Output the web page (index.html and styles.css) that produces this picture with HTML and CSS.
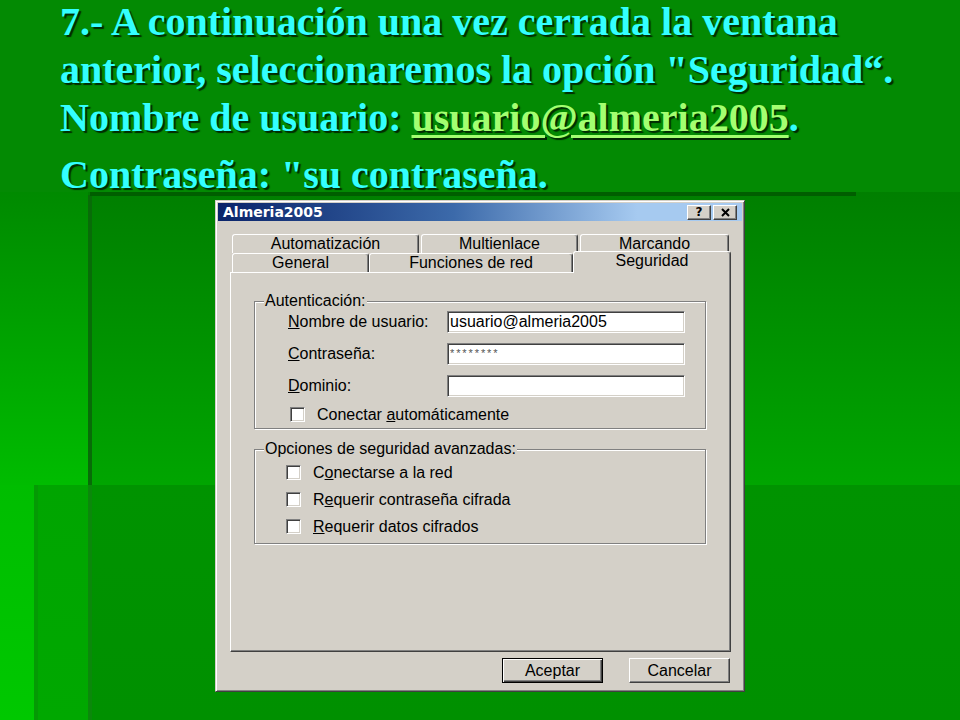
FILE: index.html
```html
<!DOCTYPE html>
<html lang="es">
<head>
<meta charset="utf-8">
<title>Almeria2005 - Seguridad</title>
<link rel="stylesheet" href="styles.css">
</head>
<body>
<div class="slide">
  <div class="text">
    <p class="p1">7.- A continuación una vez cerrada la ventana<br>anterior, seleccionaremos la opción "Seguridad“.<br>Nombre de usuario: <span class="link">usuario@almeria2005</span>.</p>
    <p class="p2">Contraseña: "su contraseña.</p>
  </div>

  <div class="dialog">
    <div class="titlebar">
      <span class="title">Almeria2005</span>
      <div class="tbtns">
        <span class="tbtn help">?</span>
        <span class="tbtn close"><svg width="11" height="9" viewBox="0 0 11 9"><path d="M2 1 L9 8 M9 1 L2 8" stroke="#000" stroke-width="2" fill="none"/></svg></span>
      </div>
    </div>

    <div class="tabs">
      <div class="tabrow back">
        <div class="tab w-auto">Automatización</div>
        <div class="tab w-multi">Multienlace</div>
        <div class="tab w-marc">Marcando</div>
      </div>
      <div class="tabrow front">
        <div class="tab w-gen">General</div>
        <div class="tab w-func">Funciones de red</div>
        <div class="tab w-seg selected">Seguridad</div>
      </div>
    </div>

    <div class="panel">
      <fieldset class="group g1">
        <legend>Autenticación:</legend>
        <div class="gbody b1">
          <div class="field"><span class="lbl"><u>N</u>ombre de usuario:</span><div class="input">usuario@almeria2005</div></div>
          <div class="field"><span class="lbl"><u>C</u>ontraseña:</span><div class="input pwd">********</div></div>
          <div class="field"><span class="lbl"><u>D</u>ominio:</span><div class="input"></div></div>
          <div class="check c1"><span class="box"></span><span class="clbl">Conectar <u>a</u>utomáticamente</span></div>
        </div>
      </fieldset>

      <fieldset class="group g2">
        <legend>Opciones de seguridad avanzadas:</legend>
        <div class="gbody b2">
          <div class="check"><span class="box"></span><span class="clbl">C<u>o</u>nectarse a la red</span></div>
          <div class="check"><span class="box"></span><span class="clbl">R<u>e</u>querir contraseña cifrada</span></div>
          <div class="check"><span class="box"></span><span class="clbl"><u>R</u>equerir datos cifrados</span></div>
        </div>
      </fieldset>
    </div>

    <div class="buttons">
      <div class="btn default">Aceptar</div>
      <div class="btn">Cancelar</div>
    </div>
  </div>
</div>
</body>
</html>
```

FILE: styles.css
```css
* { box-sizing: border-box; }
html, body { margin: 0; padding: 0; }

.slide {
  width: 960px;
  height: 720px;
  overflow: hidden;
  background-color: #038a03;
  background-repeat: no-repeat;
  background-image:
    linear-gradient(#005e00, #005e00),
    linear-gradient(#086c08, #086c08),
    linear-gradient(#0b880b, #0b880b),
    linear-gradient(#049a04, #049a04),
    linear-gradient(#00bd00, #00c800),
    linear-gradient(#00a500, #00a800),
    linear-gradient(#009300, #009000),
    linear-gradient(#008a00, #00bc00),
    linear-gradient(#007f00, #00a500);
  background-position:
    90px 192px,
    88px 195px,
    88px 485px,
    34px 485px,
    0 485px,
    34px 485px,
    92px 485px,
    0 192px,
    88px 192px;
  background-size:
    766px 4px,
    4px 290px,
    4px 235px,
    4px 235px,
    34px 235px,
    54px 235px,
    868px 235px,
    88px 293px,
    872px 293px;
}

/* ---------- slide text ---------- */
.text {
  padding-left: 60px;
  font-family: "Liberation Serif", "Times New Roman", serif;
  font-weight: bold;
  font-size: 40px;
  line-height: 48px;
  color: #3ff;
  text-shadow: 2px 2px 1px #022a02;
  white-space: nowrap;
}
.p1 { margin: -2px 0 0; }
.p2 { margin: 9px 0 0; }
.link {
  color: #a3ff70;
  text-decoration: underline;
  text-decoration-thickness: 3px;
  text-underline-offset: 4px;
}

/* ---------- dialog ---------- */
.dialog {
  margin: 1px 0 0 215px;
  width: 530px;
  height: 492px;
  padding: 2px;
  background: #d4d0c8;
  border: 1px solid;
  border-color: #d4d0c8 #404040 #404040 #d4d0c8;
  box-shadow: inset 1px 1px #fff, inset -1px -1px #808080;
  display: flex;
  flex-direction: column;
  font-family: "Liberation Sans", Arial, sans-serif;
  font-size: 16px;
  color: #000;
}

.titlebar {
  height: 18px;
  display: flex;
  align-items: center;
  justify-content: space-between;
  background: linear-gradient(90deg, #0a246a 0%, #3c6aaa 45%, #a6caf0 80%, #a6caf0 100%);
}
.title {
  padding-left: 5px;
  font-family: "DejaVu Sans", Verdana, sans-serif;
  font-weight: bold;
  font-size: 14px;
  line-height: 18px;
  color: #fff;
}
.tbtns {
  display: flex;
  gap: 2px;
  margin-right: 5px;
}
.tbtn {
  width: 24px;
  height: 15px;
  background: #d4d0c8;
  border: 1px solid;
  border-color: #fff #404040 #404040 #fff;
  box-shadow: inset -1px -1px #808080;
  display: flex;
  align-items: center;
  justify-content: center;
  font-family: "DejaVu Sans", Verdana, sans-serif;
  font-weight: bold;
  font-size: 12px;
  line-height: 12px;
}

/* ---------- tabs ---------- */
.tabs {
  margin-top: 13px;
  padding-left: 14px;
}
.tabrow {
  display: flex;
  height: 19px;
  align-items: flex-start;
}
.tabrow.back { gap: 2px; }
.tab {
  height: 19px;
  border: 1px solid;
  border-bottom: 0;
  border-color: #fff #404040 transparent #fff;
  border-radius: 3px 3px 0 0;
  box-shadow: inset -1px 0 #808080;
  background: #d4d0c8;
  text-align: center;
  line-height: 17px;
  white-space: nowrap;
}
.w-auto { width: 187px; }
.w-multi { width: 157px; }
.w-marc { width: 149px; }
.w-gen { width: 137px; }
.w-func { width: 204px; }
.w-seg { width: 158px; }
.tab.selected {
  position: relative;
  z-index: 1;
  height: 22px;
  margin-top: -2px;
}

/* ---------- panel ---------- */
.panel {
  margin-left: 12px;
  width: 501px;
  height: 380px;
  padding: 20px 24px 0 23px;
  border: 1px solid;
  border-color: #fff #404040 #404040 #fff;
  box-shadow: inset -1px -1px #808080;
}

.group {
  margin: 0;
  padding: 0;
  border: 1px solid #808080;
  box-shadow: inset 1px 1px #fff, 1px 1px #fff;
  min-width: 0;
}
.group legend {
  margin-left: 9px;
  padding: 0 1px;
  line-height: 16px;
  background: #d4d0c8;
}
.g2 { margin-top: 12px; }

.gbody {
  display: flex;
  flex-direction: column;
}
.b1 { padding: 2px 0 6px 33px; gap: 10px; }
.b2 { padding: 8px 0 9px 31px; gap: 12px; }

.field {
  display: flex;
  align-items: center;
  height: 22px;
}
.lbl { width: 159px; white-space: nowrap; }
.input {
  width: 238px;
  height: 22px;
  padding-left: 2px;
  background: #fff;
  border: 1px solid;
  border-color: #808080 #fff #fff #808080;
  box-shadow: inset 1px 1px #404040, inset -1px -1px #d4d0c8;
  line-height: 20px;
  white-space: nowrap;
}
.input.pwd {
  font-size: 11px;
  letter-spacing: 1.9px;
  color: #555;
  line-height: 18px;
}

.check {
  display: flex;
  align-items: center;
  height: 15px;
}
.c1 { padding-left: 2px; }
.box {
  width: 15px;
  height: 15px;
  flex: none;
  background: #fff;
  border: 1px solid;
  border-color: #808080 #fff #fff #808080;
  box-shadow: inset 1px 1px #404040, inset -1px -1px #d4d0c8;
}
.clbl {
  margin-left: 12px;
  white-space: nowrap;
  line-height: 16px;
}

/* ---------- buttons ---------- */
.buttons {
  display: flex;
  justify-content: flex-end;
  gap: 26px;
  margin-top: 6px;
  padding-right: 12px;
}
.btn {
  width: 101px;
  height: 25px;
  display: flex;
  align-items: center;
  justify-content: center;
  background: #d4d0c8;
  border: 1px solid;
  border-color: #fff #404040 #404040 #fff;
  box-shadow: inset -1px -1px #808080;
}
.btn.default {
  border-color: #000;
  box-shadow: inset 1px 1px #fff, inset -1px -1px #404040, inset -2px -2px #808080;
}
```
